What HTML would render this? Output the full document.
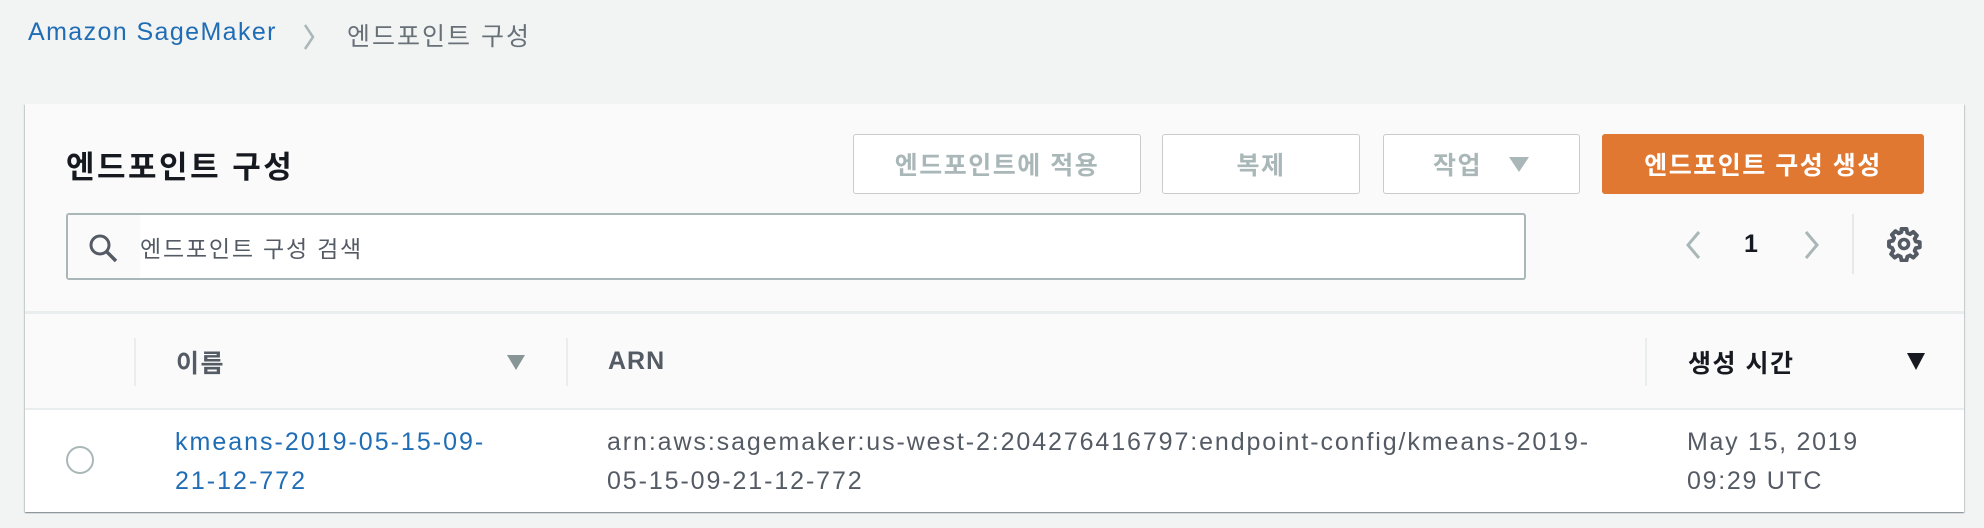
<!DOCTYPE html>
<html><head><meta charset="utf-8"><style>
*{margin:0;padding:0;box-sizing:border-box}
body{width:1984px;height:528px;background:#f2f3f3;font-family:"Liberation Sans","Noto Sans CJK KR",sans-serif;position:relative;overflow:hidden;color:#16191f}
.a{position:absolute;white-space:nowrap}
.panel{position:absolute;left:25px;top:104px;width:1939px;height:408px;background:#fafafa;box-shadow:0 1px 1px rgba(0,28,36,.3),1px 1px 1px rgba(0,28,36,.15),-1px 1px 1px rgba(0,28,36,.15)}
.btn{position:absolute;top:134px;height:60px;border:1px solid #c8cccc;background:#fff;border-radius:3px;color:#aab7b8;font-size:25px;letter-spacing:1.5px;font-weight:bold;display:flex;align-items:center;justify-content:center}
.txt{font-size:25px;line-height:39px;letter-spacing:2px}
</style></head><body>
<div class="a" style="left:28px;top:18px;font-size:25px;letter-spacing:1.4px;color:#1f6db5">Amazon SageMaker</div>
<svg class="a" style="left:302px;top:22px" width="14" height="30"><path d="M3 3 L11 15 L3 27" stroke="#aab7b8" stroke-width="2.5" fill="none"/></svg>
<div class="a" style="left:347px;top:17px;font-size:25px;letter-spacing:2px;color:#687078">엔드포인트 구성</div>
<div class="panel"></div>
<div class="a" style="left:66px;top:142px;font-size:31px;letter-spacing:2.5px;font-weight:bold">엔드포인트 구성</div>
<div class="btn" style="left:853px;width:288px">엔드포인트에 적용</div>
<div class="btn" style="left:1162px;width:198px">복제</div>
<div class="btn" style="left:1383px;width:197px">작업<svg style="margin-left:26px" width="22" height="18"><path d="M1 2 H21 L11 17 Z" fill="#aab7b8"/></svg></div>
<div class="btn" style="left:1602px;width:322px;background:#e07831;border-color:#e07831;color:#fff">엔드포인트 구성 생성</div>
<div class="a" style="left:66px;top:213px;width:1460px;height:67px;border:2px solid #aab7b8;border-radius:3px;background:#fff"></div>
<div class="a" style="left:68px;top:215px;width:72px;height:63px;background:#fafafa"></div>
<svg class="a" style="left:86px;top:231px" width="36" height="36"><circle cx="14" cy="14" r="9" stroke="#545b64" stroke-width="3" fill="none"/><path d="M21 21 L30 30" stroke="#545b64" stroke-width="3.5"/></svg>
<div class="a" style="left:140px;top:230px;font-size:23px;letter-spacing:1.8px;color:#545b64">엔드포인트 구성 검색</div>
<svg class="a" style="left:1683px;top:229px" width="20" height="32"><path d="M16 3 L5 16 L16 29" stroke="#aab7b8" stroke-width="3" fill="none"/></svg>
<div class="a" style="left:1744px;top:230px;font-size:25px;font-weight:bold">1</div>
<svg class="a" style="left:1802px;top:229px" width="20" height="32"><path d="M4 3 L15 16 L4 29" stroke="#aab7b8" stroke-width="3" fill="none"/></svg>
<div class="a" style="left:1852px;top:214px;width:2px;height:60px;background:#e6e9e9"></div>
<svg class="a" style="left:1886px;top:226px" width="36" height="36" viewBox="0 0 24 24"><path d="M10.3 2h3.4l.5 2.6 1.8.8 2.2-1.5 2.4 2.4-1.5 2.2.8 1.8 2.6.5v3.4l-2.6.5-.8 1.8 1.5 2.2-2.4 2.4-2.2-1.5-1.8.8-.5 2.6h-3.4l-.5-2.6-1.8-.8-2.2 1.5-2.4-2.4 1.5-2.2-.8-1.8L2 13.7v-3.4l2.6-.5.8-1.8-1.5-2.2 2.4-2.4 2.2 1.5 1.8-.8z" fill="none" stroke="#545b64" stroke-width="2.6" stroke-linejoin="round"/><circle cx="12" cy="12" r="3" fill="none" stroke="#545b64" stroke-width="2.4"/></svg>
<div class="a" style="left:25px;top:311px;width:1939px;height:3px;background:#eaeded"></div>
<div class="a" style="left:134px;top:338px;width:2px;height:48px;background:#eaeded"></div>
<div class="a" style="left:566px;top:338px;width:2px;height:48px;background:#eaeded"></div>
<div class="a" style="left:1645px;top:338px;width:2px;height:48px;background:#eaeded"></div>
<div class="a" style="left:176px;top:344px;font-size:25px;letter-spacing:1.5px;font-weight:bold;color:#545b64">이름</div>
<svg class="a" style="left:506px;top:353px" width="20" height="18"><path d="M1 2 H19 L10 17 Z" fill="#879596"/></svg>
<div class="a" style="left:608px;top:347px;font-size:25px;letter-spacing:1px;font-weight:bold;color:#545b64">ARN</div>
<div class="a" style="left:1688px;top:344px;font-size:25px;letter-spacing:1.5px;font-weight:bold;color:#16191f">생성 시간</div>
<svg class="a" style="left:1906px;top:351px" width="20" height="20"><path d="M1 2 H19 L10 19 Z" fill="#16191f"/></svg>
<div class="a" style="left:25px;top:408px;width:1939px;height:104px;background:#fff;border-top:2px solid #eaeded"></div>
<div class="a" style="left:66px;top:446px;width:28px;height:28px;border:2px solid #aab7b8;border-radius:50%"></div>
<div class="a txt" style="left:175px;top:423px;color:#1f6db5">kmeans-2019-05-15-09-<br>21-12-772</div>
<div class="a txt" style="left:607px;top:423px;color:#545b64;letter-spacing:1.9px">arn:aws:sagemaker:us-west-2:204276416797:endpoint-config/kmeans-2019-<br>05-15-09-21-12-772</div>
<div class="a txt" style="left:1687px;top:423px;color:#545b64;letter-spacing:1.7px">May 15, 2019<br>09:29 UTC</div>
</body></html>
